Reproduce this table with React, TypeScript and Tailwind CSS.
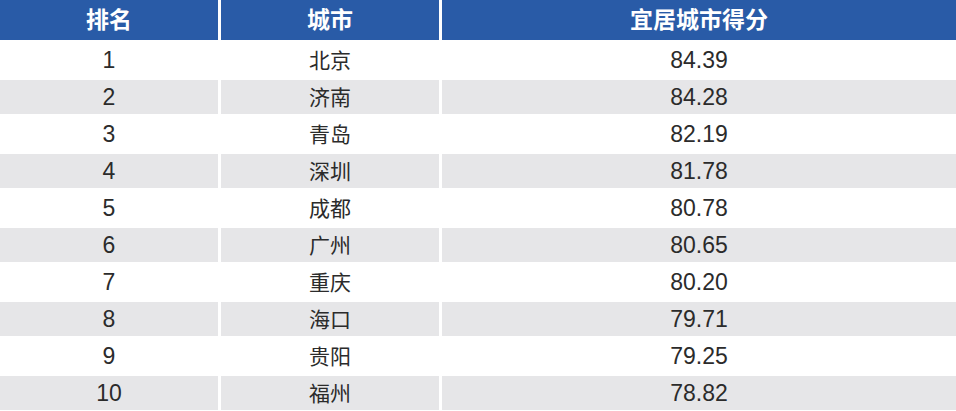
const rows = [
  { rank: 1, city: "北京", score: "84.39" },
  { rank: 2, city: "济南", score: "84.28" },
  { rank: 3, city: "青岛", score: "82.19" },
  { rank: 4, city: "深圳", score: "81.78" },
  { rank: 5, city: "成都", score: "80.78" },
  { rank: 6, city: "广州", score: "80.65" },
  { rank: 7, city: "重庆", score: "80.20" },
  { rank: 8, city: "海口", score: "79.71" },
  { rank: 9, city: "贵阳", score: "79.25" },
  { rank: 10, city: "福州", score: "78.82" },
];

const font = { fontFamily: '"Liberation Sans", "Noto Sans CJK SC", sans-serif' };

export default function App() {
  return (
    <div className="w-[956px] h-[411px] bg-white" style={font}>
      <div className="grid grid-cols-[218px_218px_1fr] gap-[3px] bg-white">
        {/* Header */}
        {["排名", "城市", "宜居城市得分"].map((h) => (
          <div
            key={h}
            className="h-[40px] flex items-center justify-center bg-[#295ba7] text-white font-bold text-[23px] leading-none"
          >
            {h}
          </div>
        ))}

        {/* Body */}
        {rows.map((r, i) => {
          const bg = i % 2 === 1 ? "bg-[#e6e6e8]" : "bg-white";
          const cell = `h-[34px] flex items-center justify-center text-[#2b2b2b] leading-none ${bg}`;
          return [
            <div key={`r${r.rank}`} className={`${cell} text-[23px]`}>
              {r.rank}
            </div>,
            <div key={`c${r.rank}`} className={`${cell} text-[21px]`}>
              {r.city}
            </div>,
            <div key={`s${r.rank}`} className={`${cell} text-[23px]`}>
              {r.score}
            </div>,
          ];
        })}
      </div>
    </div>
  );
}
